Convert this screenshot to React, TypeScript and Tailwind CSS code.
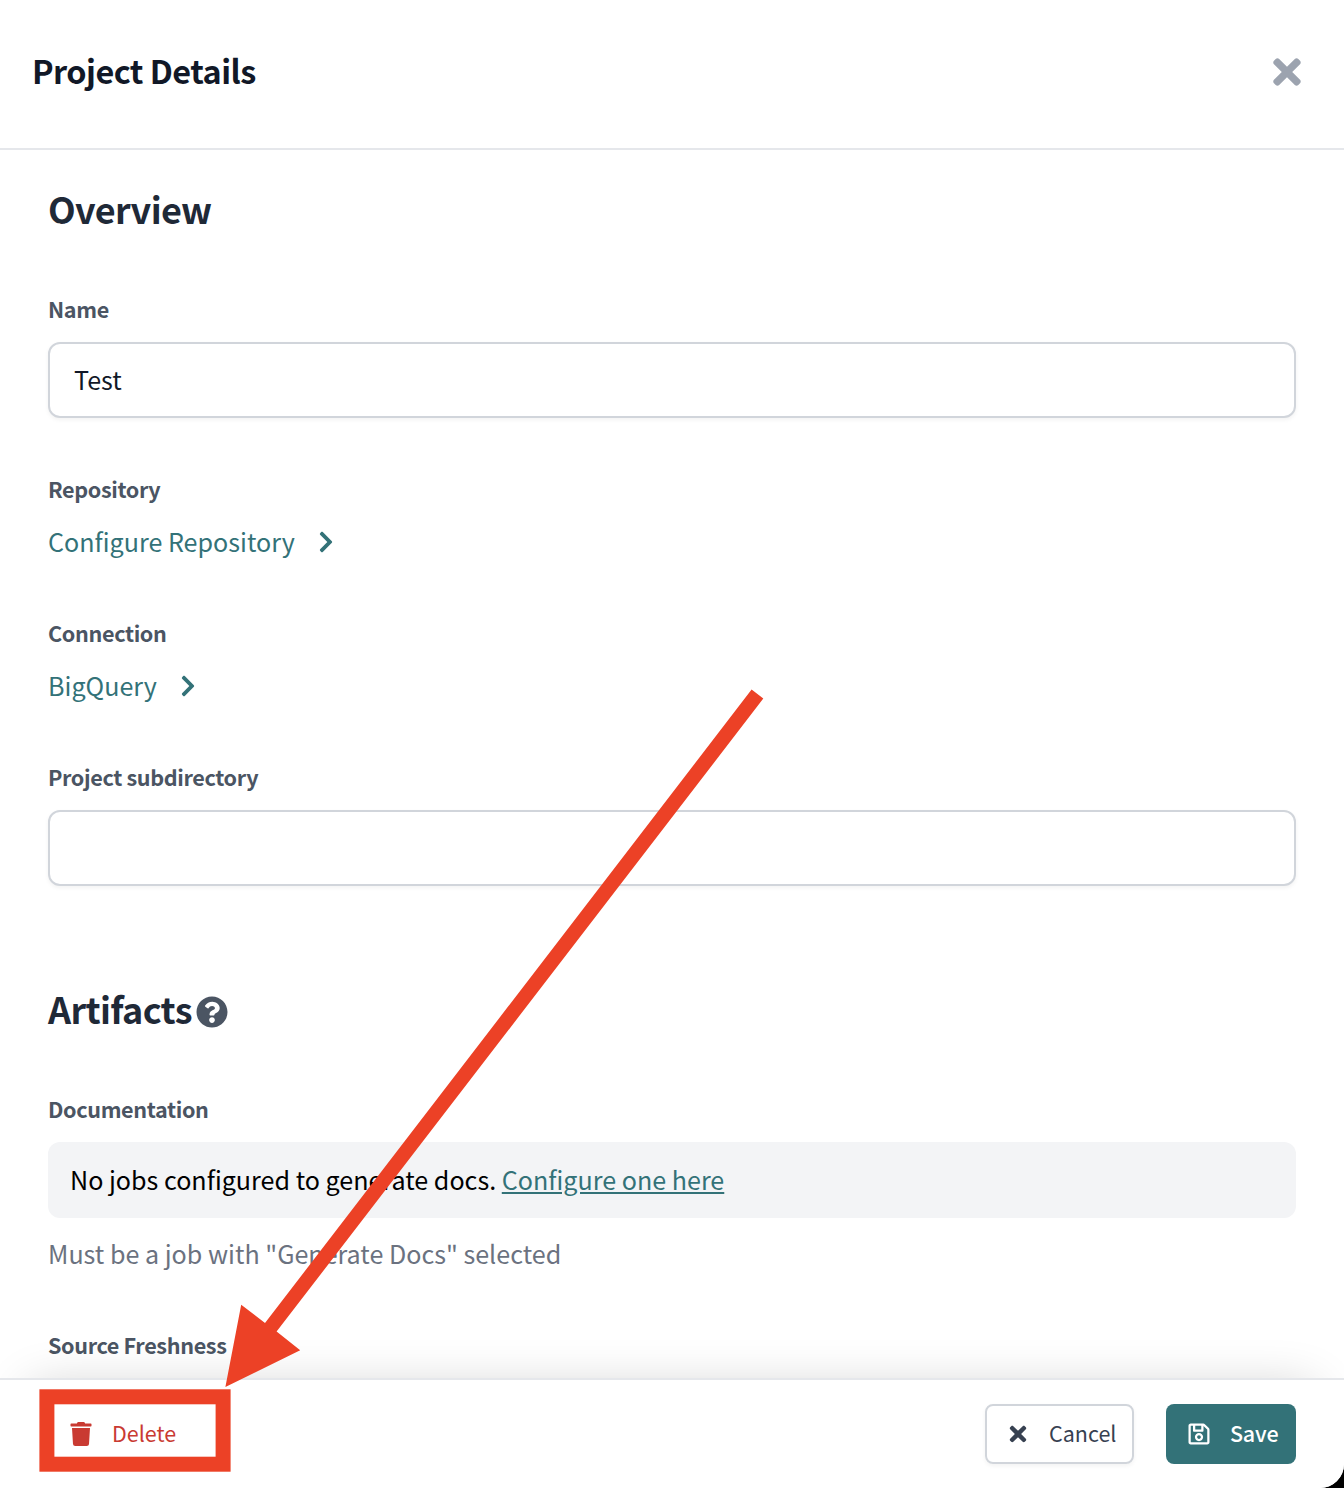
import React from "react";
import {
  FaChevronRight,
  FaQuestionCircle,
  FaRegSave,
  FaTimes,
  FaTrash,
} from "react-icons/fa";

function Label({ className = "", children }: { className?: string; children: React.ReactNode }) {
  return (
    <div
      className={`h-8 text-[21.6px] leading-8 font-bold tracking-[-0.0165em] text-[#4b5563] ${className}`}
    >
      {children}
    </div>
  );
}

function LinkRow({ children }: { children: React.ReactNode }) {
  return (
    <a className="mt-[18px] flex h-9 items-center gap-[19px] text-[25.1px] leading-9 text-[#337278]">
      <span>{children}</span>
      <FaChevronRight size={24} className="relative top-[1px]" />
    </a>
  );
}

function Field({ value }: { value: string }) {
  return (
    <div className="mt-[17px] flex h-[76px] items-center rounded-xl border-2 border-[#d1d5db] bg-white px-6 pb-[2px] text-[25.1px] leading-9 text-[#111827] shadow-[0_2px_4px_rgba(0,0,0,0.05)]">
      {value}
    </div>
  );
}

export default function App() {
  return (
    <div className="h-[1488px] w-[1344px] overflow-hidden bg-black font-['Noto_Sans_CJK_SC',sans-serif]">
      <div className="relative flex h-full flex-col overflow-hidden rounded-br-[24px] bg-white">
        <header className="flex h-[150px] shrink-0 items-center justify-between border-b-2 border-[#e5e7eb] pr-[37px] pl-8">
          <h1 className="mb-2 text-[32.4px] leading-10 font-bold tracking-[-0.0165em] text-[#111827]">
            Project Details
          </h1>
          <FaTimes size={40} className="mb-1 text-[#9ca3af]" />
        </header>

        <main className="min-h-0 flex-1 overflow-hidden px-12 pt-[38px]">
          <h2 className="h-10 text-[36px] leading-10 font-bold tracking-[-0.0185em] text-[#1f2937]">
            Overview
          </h2>
          <Label className="mt-[65px]">Name</Label>
          <Field value="Test" />
          <Label className="mt-[55px]">Repository</Label>
          <LinkRow>Configure Repository</LinkRow>
          <Label className="mt-[58px]">Connection</Label>
          <LinkRow>BigQuery</LinkRow>
          <Label className="mt-[58px]">Project subdirectory</Label>
          <Field value="" />

          <h2 className="mt-[102px] flex h-10 items-center gap-1 text-[36px] leading-10 font-bold tracking-[-0.0185em] text-[#1f2937]">
            <span>Artifacts</span>
            <FaQuestionCircle size={32} className="relative top-1 text-[#4b5563]" />
          </h2>
          <Label className="mt-[65px]">Documentation</Label>
          <div className="mt-[17px] flex h-[76px] items-center rounded-xl bg-[#f3f4f6] px-[22px] pb-[2px] text-[25.1px] leading-9 text-black">
            <p>
              No jobs configured to generate docs.{" "}
              <a className="text-[#337278] underline">Configure one here</a>
            </p>
          </div>
          <p className="mt-[17px] h-9 text-[25.1px] leading-9 text-[#6b7280]">
            Must be a job with "Generate Docs" selected
          </p>
          <Label className="mt-[58px]">Source Freshness</Label>
        </main>

        <footer className="relative flex h-[110px] shrink-0 items-center border-t-2 border-[#e5e7eb] bg-white pr-12 pl-[69px] text-[21.5px] leading-8 shadow-[0_-20px_50px_-30px_rgba(0,0,0,0.2)]">
          <button className="flex items-center gap-[19px] text-[#c93a32]">
            <FaTrash size={24} />
            <span className="-mt-[3px]">Delete</span>
          </button>
          <div className="ml-auto flex gap-8">
            <button className="flex h-[60px] w-[149px] items-center gap-[19px] rounded-lg border-2 border-[#d1d5db] pl-[19px] text-[#374151] shadow-[0_2px_4px_rgba(0,0,0,0.05)]">
              <FaTimes size={24} />
              <span className="-mt-[3px]">Cancel</span>
            </button>
            <button className="flex h-[60px] w-[130px] items-center gap-[19px] rounded-lg bg-[#337278] pl-[21px] font-medium tracking-[-0.01em] text-white">
              <FaRegSave size={24} />
              <span className="-mt-[3px]">Save</span>
            </button>
          </div>
        </footer>

        <svg
          className="pointer-events-none absolute inset-0"
          width="1344"
          height="1488"
          viewBox="0 0 1344 1488"
          fill="#ec4126"
        >
          <path d="M751.6 689.6 763.3 698.6 276.6 1331.6 300.2 1350.2 225.4 1387 241.2 1304.8 265 1323Z" />
          <rect x="46.9" y="1396.8" width="176.2" height="67.4" fill="none" stroke="#ec4126" strokeWidth="15" />
        </svg>
      </div>
    </div>
  );
}
